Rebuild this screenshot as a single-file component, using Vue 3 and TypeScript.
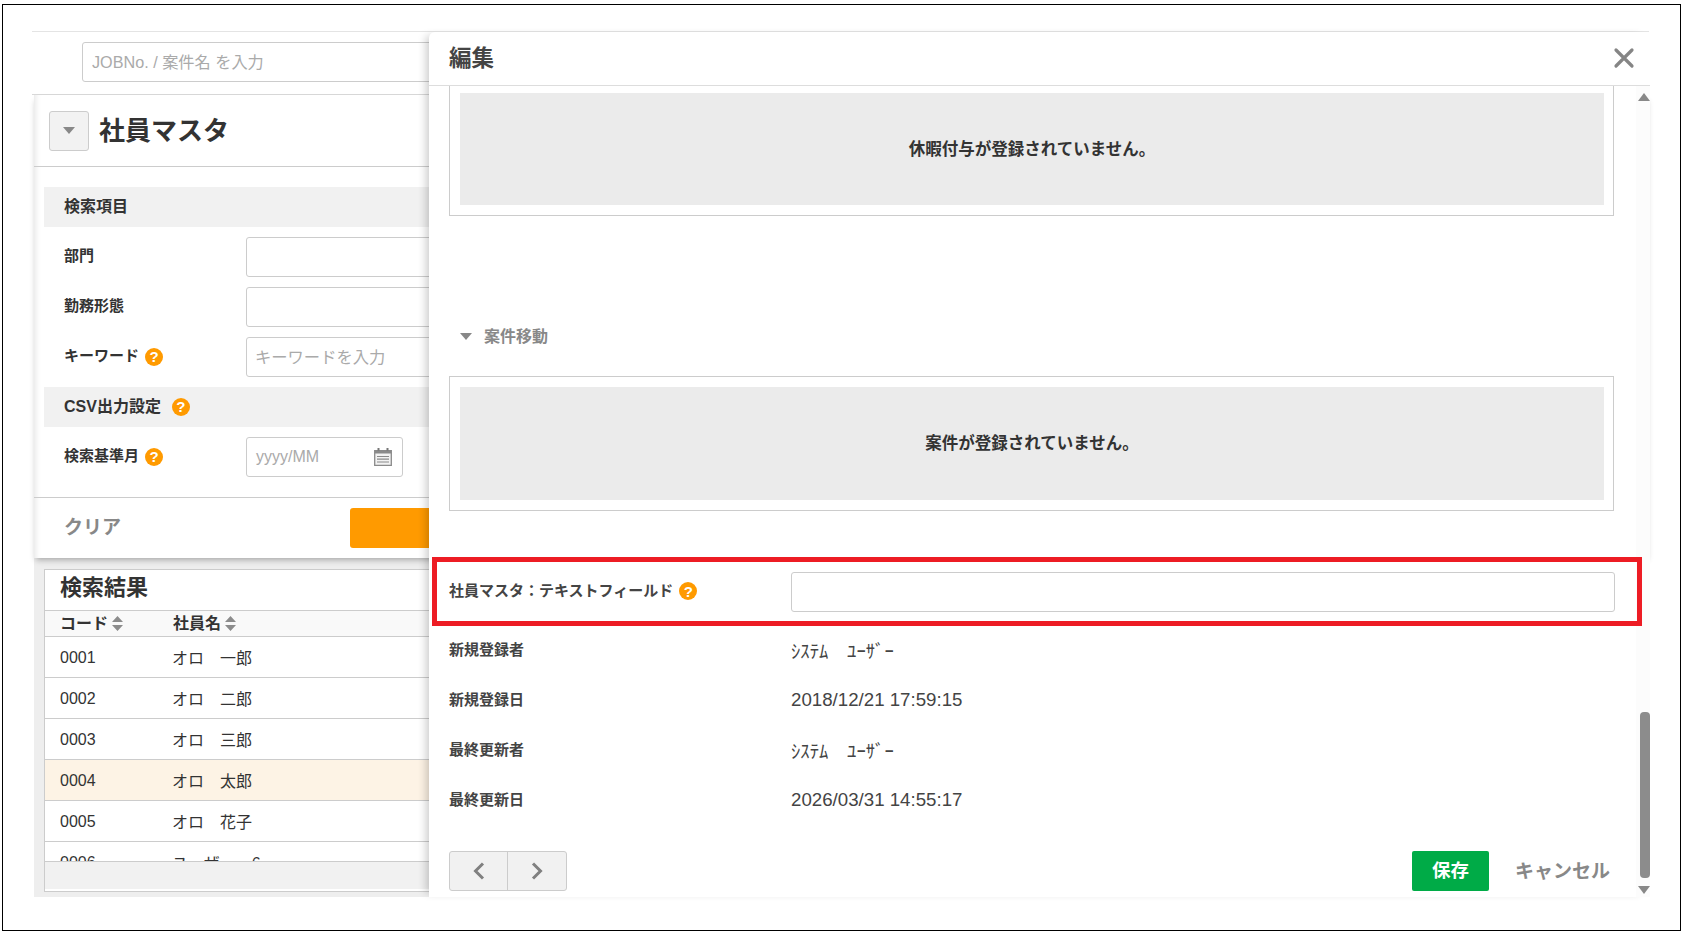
<template>
  <div class="frame">
    <div class="main">
      <div class="topbar">
        <input class="job-input" placeholder="JOBNo. / 案件名 を入力" />
      </div>
      <div class="content">
        <section class="panel">
          <div class="panel-head">
            <button class="toggle-btn"><i class="tri"></i></button>
            <h1 class="title">社員マスタ</h1>
          </div>
          <div class="form">
            <div class="bar">検索項目</div>
            <div class="row">
              <label class="row-label">部門</label>
              <input class="input wide" />
            </div>
            <div class="row">
              <label class="row-label">勤務形態</label>
              <input class="input wide" />
            </div>
            <div class="row">
              <label class="row-label">キーワード <span class="help">?</span></label>
              <input class="input wide" placeholder="キーワードを入力" />
            </div>
            <div class="bar">CSV出力設定 <span class="help bar-help">?</span></div>
            <div class="row">
              <label class="row-label">検索基準月 <span class="help">?</span></label>
              <div class="date-input">
                <span class="date-ph">yyyy/MM</span>
                <svg class="cal" width="18" height="18" viewBox="0 0 18 18">
                  <path d="M.7 2.700h16.600v14.600H.7z" fill="#f2f2f2" stroke="#8a8a8a" stroke-width="1.300" />
                  <path d="M4.500 0v3.500M13.500 0v3.500" stroke="#777" stroke-width="2" />
                  <path d="M.7 2.700h16.600v2.800H.7z" fill="#8a8a8a" />
                  <path d="M3 8.500h12M3 11.200h12M3 14h12" stroke="#8a8a8a" stroke-width="1.200" />
                </svg>
              </div>
            </div>
          </div>
          <div class="panel-foot">
            <button class="clear">クリア</button>
            <button class="search"></button>
          </div>
        </section>

        <section class="results">
          <h2 class="results-title">検索結果</h2>
          <div class="thead">
            <span class="c1">コード <svg class="sort" width="11" height="15" viewBox="0 0 11 15"><path d="M5.500 0L11 6H0zM5.500 15L11 9H0z" fill="#8c8c8c" /></svg></span>
            <span class="c2">社員名 <svg class="sort" width="11" height="15" viewBox="0 0 11 15"><path d="M5.500 0L11 6H0zM5.500 15L11 9H0z" fill="#8c8c8c" /></svg></span>
          </div>
          <div class="tbody">
            <div v-for="e in employees" :key="e.code" class="tr" :class="{ active: e.code === '0004' }">
              <span class="c1">{{ e.code }}</span>
              <span class="c2">{{ e.name }}</span>
            </div>
          </div>
          <div class="tfoot"></div>
        </section>
      </div>
    </div>

    <aside class="modal">
      <header class="modal-head">
        <h2 class="modal-title">編集</h2>
        <svg class="close" width="22" height="22" viewBox="0 0 22 22">
          <path d="M3 3l16 16M19 3L3 19" stroke="#858585" stroke-width="3.200" stroke-linecap="round" />
        </svg>
      </header>
      <div class="modal-body">
        <div class="box first"><div class="empty">休暇付与が登録されていません。</div></div>
        <div class="sub-head"><i class="tri small"></i><span>案件移動</span></div>
        <div class="box"><div class="empty">案件が登録されていません。</div></div>

        <div class="highlight">
          <label class="m-label">社員マスタ：テキストフィールド <span class="help">?</span></label>
          <input class="input m-input" />
        </div>
        <div v-for="m in meta" :key="m.label" class="meta-row">
          <span class="m-label">{{ m.label }}</span>
          <span class="m-value" :class="{ kana: m.kana }">{{ m.value }}</span>
        </div>
      </div>
      <footer class="modal-foot">
        <div class="pager">
          <button class="page-btn">
            <svg width="14" height="20" viewBox="0 0 14 20"><path d="M11 2.500L3.500 10l7.500 7.500" fill="none" stroke="#808080" stroke-width="3" /></svg>
          </button>
          <button class="page-btn">
            <svg width="14" height="20" viewBox="0 0 14 20"><path d="M3 2.500L10.500 10 3 17.500" fill="none" stroke="#808080" stroke-width="3" /></svg>
          </button>
        </div>
        <div class="actions">
          <button class="save">保存</button>
          <button class="cancel">キャンセル</button>
        </div>
      </footer>
      <div class="scrollbar">
        <i class="sb-up"></i>
        <i class="sb-thumb"></i>
        <i class="sb-down"></i>
      </div>
    </aside>
  </div>
</template>

<script setup lang="ts">
const employees = [
  { code: "0001", name: "オロ　一郎" },
  { code: "0002", name: "オロ　二郎" },
  { code: "0003", name: "オロ　三郎" },
  { code: "0004", name: "オロ　太郎" },
  { code: "0005", name: "オロ　花子" },
  { code: "0006", name: "ユーザー　6" },
];

const meta = [
  { label: "新規登録者", value: "ｼｽﾃﾑ　ﾕｰｻﾞｰ", kana: true },
  { label: "新規登録日", value: "2018/12/21 17:59:15", kana: false },
  { label: "最終更新者", value: "ｼｽﾃﾑ　ﾕｰｻﾞｰ", kana: true },
  { label: "最終更新日", value: "2026/03/31 14:55:17", kana: false },
];
</script>

<style>
html, body { margin: 0; background: #fff; }
</style>

<style scoped>
* { box-sizing: border-box; }
.frame {
  position: relative; width: 1679px; height: 927px; margin: 4px 0 0 2px;
  border: 1px solid #000; background: #fff; overflow: hidden; padding: 26px 0 0 29px;
  font-family: "Liberation Sans", "Noto Sans CJK JP", sans-serif; color: #333;
}
button { font-family: inherit; }
input { font-family: inherit; }
input::placeholder { color: #aaa; }
.main { width: 1617px; }

.topbar { height: 64px; border-top: 1px solid #e4e4e4; border-bottom: 1px solid #d8d8d8; padding: 10px 0 0 50px; }
.job-input { width: 800px; height: 40px; border: 1px solid #ccc; border-radius: 3px; padding: 0 9px; font-size: 16.200px; outline: none; }

.content { margin-left: 2px; height: 802px; background: #eee; }
.panel { height: 463px; background: #fff; box-shadow: 0 4px 6px -2px rgba(0,0,0,.3), inset 7px 0 6px -6px rgba(0,0,0,.12); position: relative; }
.panel-head { display: flex; align-items: center; height: 72px; padding: 0 15px; gap: 10px; border-bottom: 1px solid #ccc; }
.toggle-btn { width: 40px; height: 40px; background: #f2f2f2; border: 1px solid #ccc; border-radius: 3px; display: flex; align-items: center; justify-content: center; padding: 0; }
.tri { display: block; width: 0; height: 0; border-left: 6px solid transparent; border-right: 6px solid transparent; border-top: 7px solid #888; }
.title { margin: 0 0 4px; font-size: 26px; font-weight: 700; color: #333; }

.form { padding: 20px 10px 20px; display: flex; flex-direction: column; gap: 10px; border-bottom: 1px solid #ccc; }
.bar { height: 40px; background: #f1f1f1; display: flex; align-items: center; padding: 0 0 4px 20px; font-size: 16px; font-weight: 700; }
.bar-help { margin: 3px 0 0 11px; }
.row { display: flex; align-items: center; height: 40px; }
.row-label { width: 202px; height: 40px; padding: 0 0 5px 20px; font-size: 15px; font-weight: 700; display: flex; align-items: center; gap: 6px; }
.row-label .help { margin-top: 4px; }
.help { display: inline-flex; align-items: center; justify-content: center; width: 18px; height: 18px; border-radius: 50%; background: #ff9a00; color: #fff; font-size: 15px; font-weight: 700; flex: none; line-height: 1; }
.input { height: 40px; border: 1px solid #ccc; border-radius: 3px; outline: none; padding: 0 8px; font-size: 16.300px; }
.wide { width: 400px; }
.date-input { width: 157px; height: 40px; border: 1px solid #ccc; border-radius: 3px; display: flex; align-items: center; justify-content: space-between; padding: 0 10px 0 9px; }
.date-ph { font-size: 16px; color: #aaa; }
.cal { flex: none; }

.panel-foot { display: flex; align-items: center; height: 60px; padding-left: 30px; }
.clear { border: 0; background: none; padding: 0 0 6px; font-size: 19px; font-weight: 700; color: #888; width: 286px; text-align: left; }
.search { width: 300px; height: 40px; background: #ff9a00; border: 0; border-radius: 3px; }

.results { margin: 11px 0 0 10px; height: 323px; background: #fff; border: 1px solid #ccc; display: flex; flex-direction: column; overflow: hidden; padding-bottom: 2px; }
.results-title { margin: 0; height: 40px; font-size: 22px; line-height: 36px; font-weight: 700; padding-left: 15px; flex: none; }
.thead { display: flex; align-items: center; height: 27px; flex: none; background: #f9f9f9; border-top: 1px solid #ccc; border-bottom: 1px solid #ccc; font-size: 16px; font-weight: 700; }
.thead span { padding-bottom: 3px; }
.thead .sort { margin-top: 3px; }
.c1 { width: 128px; padding-left: 15px; display: flex; align-items: center; gap: 4px; }
.c2 { display: flex; align-items: center; gap: 4px; }
.sort { flex: none; }
.tbody { flex: none; height: 225px; overflow: hidden; }
.tr { display: flex; align-items: center; height: 41px; border-bottom: 1px solid #ccc; font-size: 16px; color: #333; }
.tr .c1 { padding-top: 2px; }
.tr .c2 { padding-bottom: 1px; margin-left: -1px; }
.tr.active { background: #fdf3e5; }
.tfoot { flex: 1; background: #f1f1f1; border-top: 1px solid #ccc; margin-top: -1px; position: relative; }

.modal { position: absolute; left: 426px; top: 27px; width: 1221px; height: 865px; background: #fff; border-radius: 6px 0 0 0; box-shadow: -7px 0 8px -4px rgba(0,0,0,.2); }
.modal-head { height: 54px; display: flex; align-items: center; justify-content: space-between; padding: 0 15px 2px 20px; border-bottom: 1px solid #ddd; }
.modal-title { margin: 0 0 4px; font-size: 22.500px; font-weight: 700; color: #444; }
.modal-body { padding: 0 36px 0 20px; }
.box { border: 1px solid #ccc; padding: 10px 9px 10px 10px; }
.box.first { border-top: 0; padding-top: 7px; height: 130px; }
.empty { height: 113px; background: #ebebeb; display: flex; align-items: center; justify-content: center; padding-bottom: 4px; font-size: 16.500px; font-weight: 700; color: #333; }
.box.first .empty { height: 112px; padding-bottom: 2px; }
.sub-head { display: flex; align-items: center; gap: 12px; margin-top: 109px; height: 22px; padding-left: 11px; font-size: 16px; font-weight: 700; color: #888; }
.sub-head span { padding-bottom: 3px; }
.tri.small { border-left-width: 6px; border-right-width: 6px; border-top-width: 7px; }
.sub-head + .box { margin-top: 29px; height: 135px; }
.highlight { position: relative; z-index: 1; display: flex; align-items: center; margin: 46px -28px 0 -17px; height: 69px; border: 5px solid #ed1c24; padding-left: 12px; padding-right: 22px; }
.highlight .m-label { width: 342px; display: flex; align-items: center; gap: 6px; }
.highlight .m-label .help { margin-top: 4px; }
.m-input { flex: 1; }
.m-label { font-size: 15px; font-weight: 700; color: #444; padding-bottom: 5px; }
.meta-row { display: flex; align-items: center; height: 50px; }
.meta-row .m-label { width: 342px; }
.m-value { font-size: 18.700px; color: #444; padding-bottom: 2px; }
.m-value.kana { padding-bottom: 4px; }

.modal-foot { position: absolute; left: 20px; right: 36px; top: 819px; display: flex; justify-content: space-between; }
.pager { display: flex; width: 118px; height: 40px; border: 1px solid #ccc; border-radius: 3px; background: #f1f1f1; }
.page-btn { width: 57px; border: 0; background: none; padding: 0; display: flex; align-items: center; justify-content: center; }
.page-btn + .page-btn { flex: 1; border-left: 1px solid #ccc; }
.actions { display: flex; align-items: center; gap: 26px; padding-right: 4px; }
.save { width: 77px; height: 40px; border: 0; border-radius: 2px; background: #00ab47; color: #fff; font-size: 18.500px; font-weight: 700; padding: 0 0 4px; }
.cancel { border: 0; background: none; padding: 0 0 4px; font-size: 19px; font-weight: 700; color: #888; }

.scrollbar { position: absolute; right: 0; top: 54px; width: 14px; height: 811px; background: #fcfcfc; }
.sb-up { position: absolute; right: 0; top: 7px; width: 0; height: 0; border-left: 6px solid transparent; border-right: 6px solid transparent; border-bottom: 8px solid #888; }
.sb-thumb { position: absolute; right: 0; top: 626px; width: 10px; height: 166px; background: #8c8c8c; border-radius: 4px; }
.sb-down { position: absolute; right: 0; top: 800px; width: 0; height: 0; border-left: 6px solid transparent; border-right: 6px solid transparent; border-top: 8px solid #888; }
</style>
